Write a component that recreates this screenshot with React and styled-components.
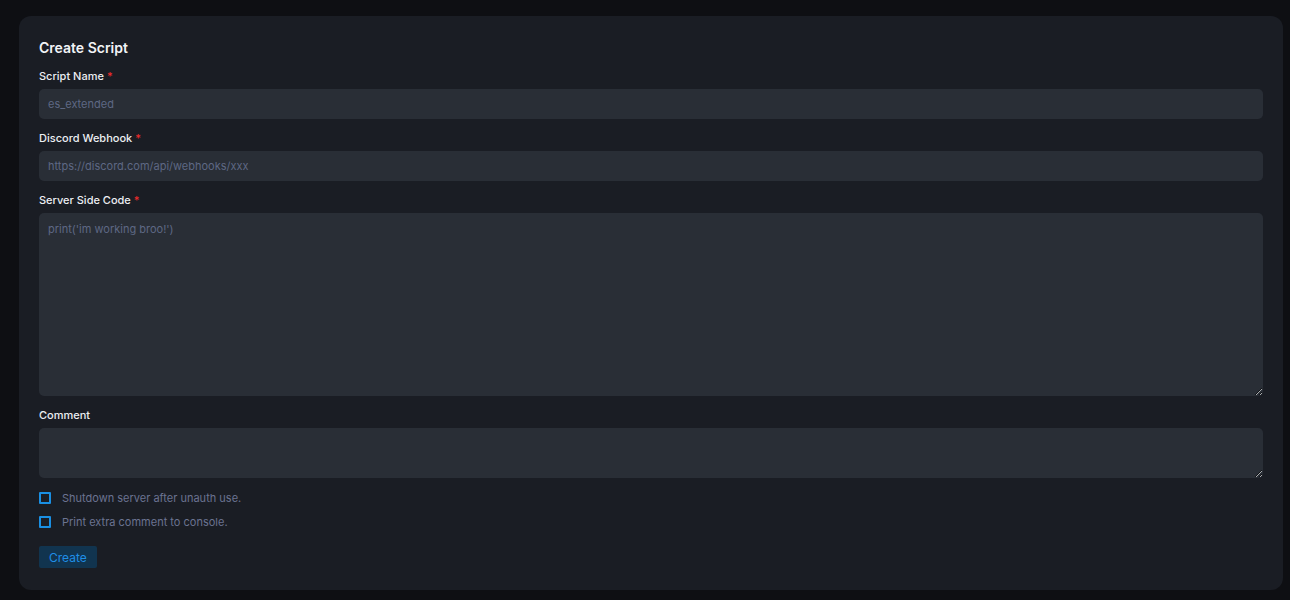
import styled, { createGlobalStyle } from "styled-components";

const GlobalStyle = createGlobalStyle`
  html, body {
    margin: 0;
    background: #0e0f13;
    font-family: Inter, "Noto Sans", sans-serif;
  }
`;

const Page = styled.div`
  padding: 16px 7px 10px 19px;
  min-height: 600px;
  box-sizing: border-box;
`;

const Card = styled.form`
  background: #1a1d24;
  border-radius: 12px;
  padding: 21px 20px 22px 20px;
  display: flex;
  flex-direction: column;
`;

const Title = styled.h2`
  margin: 0 0 8px;
  font-size: 14px;
  line-height: 22px;
  font-weight: 600;
  color: #f2f4f7;
`;

const Field = styled.div`
  display: flex;
  flex-direction: column;
  margin-bottom: 10px;
`;

const Label = styled.label`
  font-size: 11px;
  line-height: 18px;
  font-weight: 500;
  color: #eceef2;
  margin-bottom: 4px;

  span {
    color: #ef2b2b;
    margin-left: 3px;
  }
`;

const Input = styled.input`
  height: 30px;
  box-sizing: border-box;
  border: none;
  outline: none;
  border-radius: 5px;
  background: #292e36;
  color: #c9cfdc;
  padding: 0 9px;
  font-family: inherit;
  font-size: 11px;

  &::placeholder {
    color: #5e6884;
  }
`;

const TextArea = styled.textarea`
  height: ${(p) => p.$h}px;
  box-sizing: border-box;
  border: none;
  outline: none;
  border-radius: 5px;
  background: #292e36;
  color: #c9cfdc;
  padding: 8px 9px;
  font-family: inherit;
  font-size: 11px;
  line-height: 16px;
  resize: vertical;

  &::placeholder {
    color: #5e6884;
  }
`;

const Checks = styled.div`
  display: flex;
  flex-direction: column;
  gap: 6px;
  margin-top: 1px;
  margin-bottom: 15px;
`;

const CheckRow = styled.label`
  display: flex;
  align-items: center;
  gap: 11px;
  height: 18px;
  font-size: 11px;
  color: #6b7391;
  cursor: pointer;
`;

const Box = styled.input.attrs({ type: "checkbox" })`
  appearance: none;
  margin: 0;
  width: 12px;
  height: 12px;
  border: 2px solid #1a8fe3;
  border-radius: 1px;
  background: transparent;
  box-sizing: border-box;

  &:checked {
    background: #1a8fe3;
  }
`;

const Button = styled.button`
  align-self: flex-start;
  height: 22px;
  padding: 0 10px;
  border: none;
  border-radius: 2px;
  background: #11344f;
  color: #1f8ee6;
  font-family: inherit;
  font-size: 12px;
  font-weight: 400;
  cursor: pointer;
`;

export default function App() {
  return (
    <>
      <GlobalStyle />
      <Page>
        <Card onSubmit={(e) => e.preventDefault()}>
          <Title>Create Script</Title>
          <Field>
            <Label>
              Script Name<span>*</span>
            </Label>
            <Input placeholder="es_extended" />
          </Field>
          <Field>
            <Label>
              Discord Webhook<span>*</span>
            </Label>
            <Input placeholder="https://discord.com/api/webhooks/xxx" />
          </Field>
          <Field>
            <Label>
              Server Side Code<span>*</span>
            </Label>
            <TextArea $h={183} placeholder="print('im working broo!')" />
          </Field>
          <Field>
            <Label>Comment</Label>
            <TextArea $h={50} />
          </Field>
          <Checks>
            <CheckRow>
              <Box />
              Shutdown server after unauth use.
            </CheckRow>
            <CheckRow>
              <Box />
              Print extra comment to console.
            </CheckRow>
          </Checks>
          <Button type="submit">Create</Button>
        </Card>
      </Page>
    </>
  );
}
